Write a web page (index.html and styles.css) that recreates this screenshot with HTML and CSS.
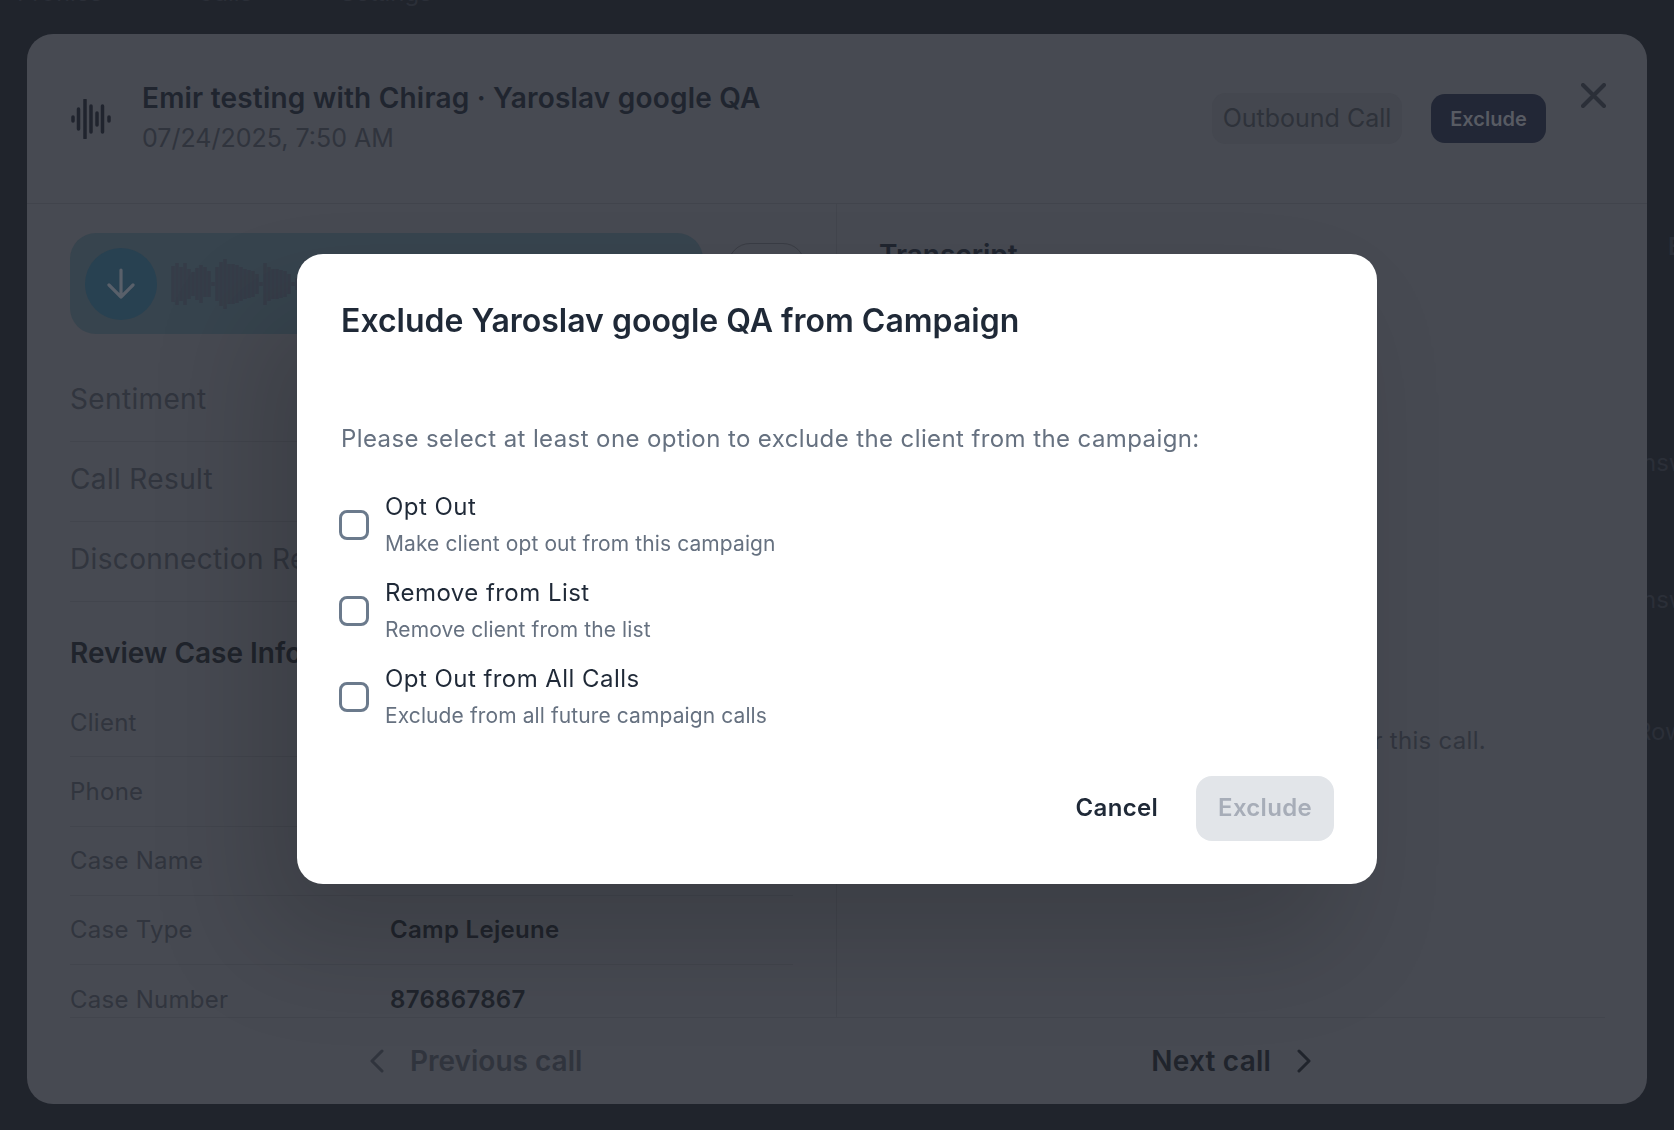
FILE: index.html
```html
<!DOCTYPE html>
<html lang="en">
<head>
<meta charset="utf-8">
<title>Exclude from Campaign</title>
<link rel="stylesheet" href="styles.css">
</head>
<body>
<div class="page">
  <nav class="page-nav">
    <span class="nav-a">Profiles</span>
    <span class="nav-b">Calls</span>
    <span class="nav-c">Settings</span>
  </nav>
  <div class="page-side">
    <span class="side-e">E</span>
    <span class="side-a">nsw</span>
    <span class="side-b">nsw</span>
    <span class="side-c">Row</span>
  </div>
</div>

<section class="panel">
  <header class="panel-head">
    <svg class="wave-icon" viewBox="0 0 40 40" aria-hidden="true">
      <path d="M2 18v4M7.500 10v20M14 1v38M20 7v26M26 14v12M31.500 7v26M38 18v4"/>
    </svg>
    <div class="head-text">
      <h2 class="head-title">Emir testing with Chirag · Yaroslav google QA</h2>
      <p class="head-date">07/24/2025, 7:50 AM</p>
    </div>
    <span class="pill">Outbound Call</span>
    <span class="head-exclude">Exclude</span>
    <svg class="close-icon" viewBox="0 0 25 25" aria-hidden="true"><path d="M2 2l21 21M23 2L2 23"/></svg>
  </header>

  <div class="panel-body">
    <div class="col-left">
      <div class="audio-row">
        <div class="audio">
          <span class="audio-btn">
            <svg viewBox="0 0 28 32" aria-hidden="true"><path d="M14 2v27M2 17l12 12 12-12"/></svg>
          </span>
          <svg class="audio-wave" viewBox="0 0 200 50" aria-hidden="true">
            <path d="M2 7v36M6 4v42M10 8v34M14 4v42M18 10v30M22 13v24M26 9v32M30 6v38M34 8v30M38 12v26M42 23v4M46 8v34M50 3v44M54 0v50M58 5v40M62 5v40M66 6v38M70 8v34M74 10v30M78 11v28M82 12v26M86 15v20M90 23v4M94 4v42M98 8v34M102 10v30M106 10v30M110 11v28M114 12v26M118 15v20M122 23v4M126 19v12M130 7v36M134 1v48M138 5v40M142 19v12M146 23v4"/>
          </svg>
        </div>
        <span class="speed">1x</span>
      </div>
      <div class="stat-row">Sentiment</div>
      <div class="stat-row">Call Result</div>
      <div class="stat-row">Disconnection Reason</div>
      <h3 class="case-title">Review Case Information</h3>
      <dl class="case-list">
        <div class="case-row"><dt>Client</dt><dd>Yaroslav google QA</dd></div>
        <div class="case-row"><dt>Phone</dt><dd>+1 555 010 2231</dd></div>
        <div class="case-row"><dt>Case Name</dt><dd>Emir testing</dd></div>
        <div class="case-row"><dt>Case Type</dt><dd>Camp Lejeune</dd></div>
        <div class="case-row"><dt>Case Number</dt><dd>876867867</dd></div>
      </dl>
    </div>
    <div class="col-right">
      <h3 class="transcript-title">Transcript</h3>
      <p class="transcript-empty">There is no transcript available for this call.</p>
    </div>
  </div>

  <footer class="panel-foot">
    <span class="foot-link foot-prev">
      <svg viewBox="0 0 14 24" aria-hidden="true"><path d="M12 2L2 12l10 10"/></svg>
      Previous call
    </span>
    <span class="foot-link foot-next">
      Next call
      <svg viewBox="0 0 14 24" aria-hidden="true"><path d="M2 2l10 10L2 22"/></svg>
    </span>
  </footer>
</section>

<div class="modal-layer">
  <div class="modal" role="dialog" aria-modal="true">
    <h2 class="modal-title">Exclude Yaroslav google QA from Campaign</h2>
    <p class="modal-desc">Please select at least one option to exclude the client from the campaign:</p>
    <div class="options">
      <label class="option">
        <span class="check"></span>
        <span class="option-text"><span class="option-label">Opt Out</span><span class="option-sub">Make client opt out from this campaign</span></span>
      </label>
      <label class="option">
        <span class="check"></span>
        <span class="option-text"><span class="option-label">Remove from List</span><span class="option-sub">Remove client from the list</span></span>
      </label>
      <label class="option">
        <span class="check"></span>
        <span class="option-text"><span class="option-label">Opt Out from All Calls</span><span class="option-sub">Exclude from all future campaign calls</span></span>
      </label>
    </div>
    <div class="modal-actions">
      <button class="btn-cancel" type="button">Cancel</button>
      <button class="btn-exclude" type="button" disabled>Exclude</button>
    </div>
  </div>
</div>
</body>
</html>
```

FILE: styles.css
```css
* { box-sizing: border-box; }
html, body { margin: 0; padding: 0; height: 100%; }
body {
  background: #20242c;
  font-family: Inter, "Noto Sans", sans-serif;
  overflow: hidden;
  color: #20252f;
}
h2, h3, p, dl, dd { margin: 0; font-weight: inherit; }

/* page behind the drawer */
.page { position: relative; height: 1130px; overflow: hidden; }
.page-nav {
  display: flex;
  margin-top: -22px;
  padding-left: 17px;
  height: 30px;
  font-size: 24px;
  line-height: 30px;
  color: #2b2f38;
}
.nav-a { width: 180px; }
.nav-b { width: 143px; }
.page-side {
  position: absolute;
  left: 1648px;
  top: 0;
  width: 60px;
  height: 100%;
  color: #2b2f38;
  font-size: 24px;
  line-height: 30px;
}
.page-side span { position: absolute; }
.side-e { top: 232px; left: 20px; font-weight: 600; }
.side-a { top: 448px; left: -6px; }
.side-b { top: 585px; left: -6px; }
.side-c { top: 717px; left: -12px; }

/* drawer */
.panel {
  position: fixed;
  top: 34px;
  left: 27px;
  right: 27px;
  bottom: 26px;
  display: flex;
  flex-direction: column;
  background: #474a52;
  border-radius: 26px;
  overflow: hidden;
}
.panel-head {
  display: flex;
  align-items: center;
  height: 170px;
  flex: none;
  padding-left: 44px;
  border-bottom: 1px solid #41444c;
}
.wave-icon { width: 40px; height: 40px; flex: none; }
.wave-icon path { fill: none; stroke: #20242e; stroke-width: 3.5; stroke-linecap: round; }
.head-text { flex: 1; margin: 0 0 2px 31px; }
.head-title { font-size: 28px; line-height: 36px; font-weight: 600; color: #20252f; letter-spacing: 0.2px; }
.head-date { margin-top: 5px; font-size: 25px; line-height: 34px; color: #30343d; }
.pill {
  display: flex;
  align-items: center;
  justify-content: center;
  width: 190px;
  height: 51px;
  padding-bottom: 2px;
  background: #44474f;
  border-radius: 14px;
  font-size: 25px;
  color: #2e323a;
}
.head-exclude {
  display: flex;
  align-items: center;
  justify-content: center;
  width: 115px;
  height: 49px;
  margin-left: 29px;
  background: #222736;
  border-radius: 14px;
  font-size: 20px;
  font-weight: 600;
  color: #585b63;
}
.close-icon {
  align-self: flex-start;
  width: 25px;
  height: 25px;
  margin: 49px 41px 0 35px;
  flex: none;
}
.close-icon path { fill: none; stroke: #2b2f38; stroke-width: 4; stroke-linecap: round; }

.panel-body {
  flex: 1;
  min-height: 0;
  display: grid;
  grid-template-columns: 810px 1fr;
  overflow: hidden;
}
.col-left { padding: 29px 43px 0; border-right: 1px solid #42454d; overflow: hidden; }
.audio-row { display: flex; align-items: flex-start; gap: 25px; margin-bottom: 28px; }
.audio {
  width: 633px;
  height: 101px;
  flex: none;
  display: flex;
  align-items: center;
  gap: 14px;
  padding-left: 15px;
  background: #37444e;
  border-radius: 26px;
}
.audio-btn {
  width: 72px;
  height: 72px;
  flex: none;
  display: flex;
  align-items: center;
  justify-content: center;
  background: #284151;
  border-radius: 50%;
}
.audio-btn svg { width: 28px; height: 32px; }
.audio-btn path { fill: none; stroke: #59606a; stroke-width: 3.2; stroke-linecap: round; stroke-linejoin: round; }
.audio-wave { width: 200px; height: 50px; flex: none; }
.audio-wave path { fill: none; stroke: #363c48; stroke-width: 3.5; }
.speed {
  width: 77px;
  height: 66px;
  flex: none;
  margin-top: 10px;
  border: 1px solid #393c44;
  border-radius: 22px;
  display: flex;
  align-items: center;
  justify-content: center;
  color: #30343d;
  font-size: 22px;
}
.stat-row {
  height: 80px;
  display: flex;
  align-items: center;
  padding-bottom: 6px;
  border-bottom: 1px solid #42454d;
  font-size: 28px;
  letter-spacing: 0.35px;
  color: #31353e;
}
.case-title {
  margin-top: 33px;
  font-size: 28px;
  line-height: 36px;
  font-weight: 600;
  color: #20242c;
}
.case-list { margin-top: 17px; }
.case-row {
  display: flex;
  align-items: center;
  height: 69.250px;
  border-bottom: 1px solid #42454d;
  font-size: 24px;
}
.case-row dt { width: 320px; color: #31353e; letter-spacing: 0.25px; }
.case-row dd { font-weight: 600; color: #20242c; letter-spacing: 0.3px; }

.col-right { padding: 0 42px; overflow: hidden; }
.transcript-title { margin-top: 33px; font-size: 28px; line-height: 36px; font-weight: 600; color: #20252f; }
.transcript-empty { margin-top: 452px; padding-left: 106px; font-size: 24px; line-height: 32px; letter-spacing: 0.3px; color: #31353e; }

.panel-foot {
  flex: none;
  height: 87px;
  margin: 0 42px 0 43px;
  border-top: 1px solid #42454d;
  display: flex;
  align-items: center;
}
.foot-link { display: inline-flex; align-items: center; font-size: 28px; font-weight: 600; }
.foot-link svg { width: 14px; height: 24px; flex: none; }
.foot-link path { fill: none; stroke: currentColor; stroke-width: 3; stroke-linecap: round; stroke-linejoin: round; }
.foot-prev { color: #30343d; gap: 26px; margin-left: 300px; }
.foot-next { color: #20242c; gap: 26px; margin-left: 569px; letter-spacing: 0.2px; }

/* confirm dialog */
.modal-layer {
  position: fixed;
  inset: 0;
  display: flex;
  align-items: center;
  justify-content: center;
}
.modal {
  width: 1080px;
  height: 630px;
  margin-top: 8px;
  padding: 49px 43px 43px 44px;
  display: flex;
  flex-direction: column;
  background: #fff;
  border-radius: 26px;
  box-shadow: -40px 60px 110px rgba(0, 0, 0, 0.16);
}
.modal-title { font-size: 32px; line-height: 36px; font-weight: 600; color: #1f2937; }
.modal-desc { margin-top: 83px; font-size: 24px; line-height: 34px; letter-spacing: 0.4px; color: #667180; }
.options { display: flex; flex-direction: column; gap: 17px; margin-top: 34px; }
.option { display: flex; align-items: center; gap: 16px; }
.check {
  width: 30px;
  height: 30px;
  margin-left: -2px;
  flex: none;
  border: 3px solid #6b7a8c;
  border-radius: 8px;
  background: #fff;
}
.option-text { display: flex; flex-direction: column; gap: 5px; }
.option-label { font-size: 24px; line-height: 34px; letter-spacing: 0.45px; color: #1f2937; }
.option-sub { font-size: 21px; line-height: 30px; letter-spacing: 0.1px; color: #667180; }
.modal-actions { margin-top: auto; display: flex; justify-content: flex-end; align-items: center; gap: 38px; }
.btn-cancel, .btn-exclude {
  border: 0;
  padding: 0 0 2px;
  font-family: inherit;
  font-size: 24px;
  font-weight: 600;
  letter-spacing: 0.3px;
}
.btn-cancel { background: none; color: #1f2937; }
.btn-exclude { width: 138px; height: 65px; background: #e2e5e9; color: #a7adb8; border-radius: 16px; }
```
